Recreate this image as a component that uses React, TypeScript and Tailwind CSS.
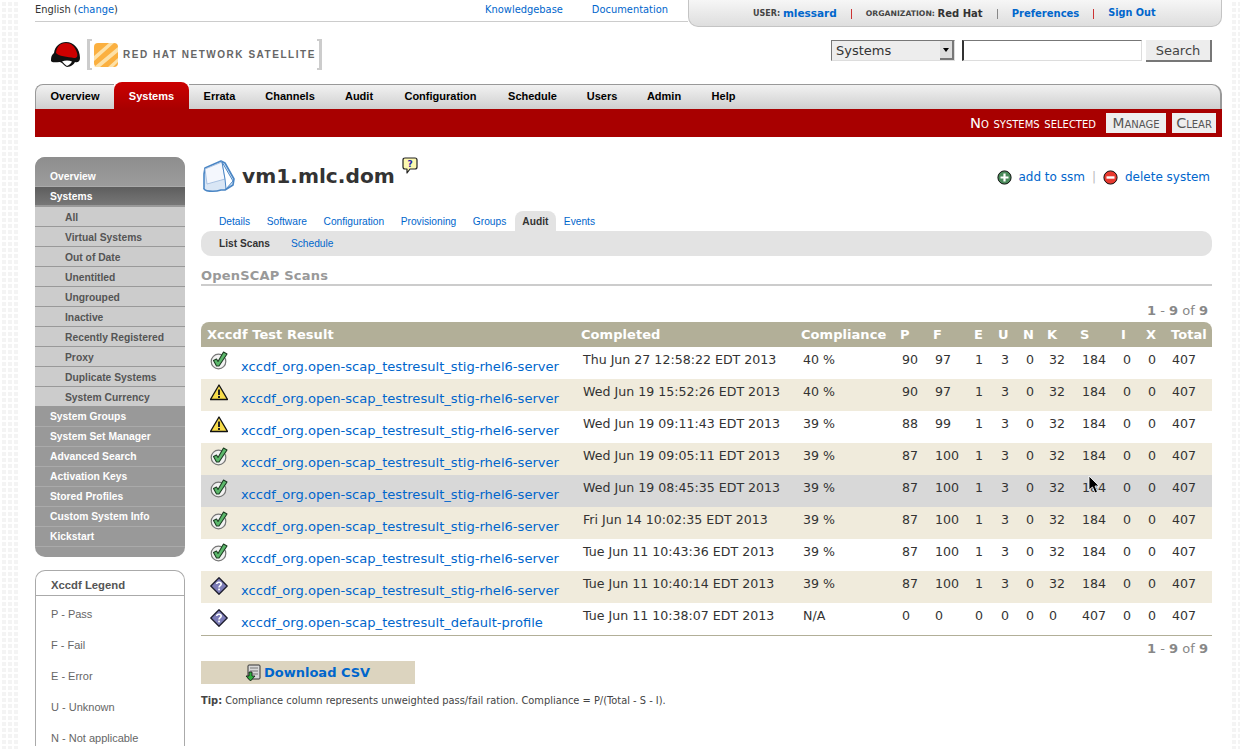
import React from "react";

const Check = () => (
  <svg width="18" height="19" viewBox="0 0 18 19" className="block">
    <circle cx="8.5" cy="10.5" r="7.3" fill="#f2f2f2" stroke="#777" strokeWidth="1.2" />
    <path d="M3.5 9.5 L6.5 8 L8 10.5 L13.5 1 L17 3 L9 15 L6.5 15 Z" fill="#5cb86b" stroke="#1c3d22" strokeWidth="1.1" strokeLinejoin="round" />
  </svg>
);
const Warn = () => (
  <svg width="18" height="17" viewBox="0 0 18 17" className="mt-px block">
    <path d="M9 1 L17.5 15.5 L0.5 15.5 Z" fill="#f7dc4a" stroke="#111" strokeWidth="1.3" strokeLinejoin="round" />
    <rect x="8" y="5.5" width="2" height="5.5" fill="#222" />
    <rect x="8" y="12" width="2" height="2" fill="#222" />
  </svg>
);
const Unknown = () => (
  <svg width="18" height="18" viewBox="0 0 18 18" className="mt-[2px] block">
    <path d="M9 0.8 L17.2 9 L9 17.2 L0.8 9 Z" fill="#7d7db8" stroke="#1c1c2c" strokeWidth="1.3" strokeLinejoin="round" />
    <path d="M6.7 7 C6.9 4.6 11.2 4.6 11.2 7.1 C11.2 8.8 9 8.7 9 10.6" fill="none" stroke="#fff" strokeWidth="1.6" />
    <rect x="8.2" y="11.6" width="1.7" height="1.7" fill="#fff" />
  </svg>
);

const rows: [React.ReactNode, string, string, string, string, string, string, string, string, string, string, string, string, string, string][] = [
  [<Check />, "xccdf_org.open-scap_testresult_stig-rhel6-server", "Thu Jun 27 12:58:22 EDT 2013", "40 %", "90", "97", "1", "3", "0", "32", "184", "0", "0", "407", "bg-white"],
  [<Warn />, "xccdf_org.open-scap_testresult_stig-rhel6-server", "Wed Jun 19 15:52:26 EDT 2013", "40 %", "90", "97", "1", "3", "0", "32", "184", "0", "0", "407", "bg-[#f0ebdc]"],
  [<Warn />, "xccdf_org.open-scap_testresult_stig-rhel6-server", "Wed Jun 19 09:11:43 EDT 2013", "39 %", "88", "99", "1", "3", "0", "32", "184", "0", "0", "407", "bg-white"],
  [<Check />, "xccdf_org.open-scap_testresult_stig-rhel6-server", "Wed Jun 19 09:05:11 EDT 2013", "39 %", "87", "100", "1", "3", "0", "32", "184", "0", "0", "407", "bg-[#f0ebdc]"],
  [<Check />, "xccdf_org.open-scap_testresult_stig-rhel6-server", "Wed Jun 19 08:45:35 EDT 2013", "39 %", "87", "100", "1", "3", "0", "32", "184", "0", "0", "407", "bg-[#d8d8d8]"],
  [<Check />, "xccdf_org.open-scap_testresult_stig-rhel6-server", "Fri Jun 14 10:02:35 EDT 2013", "39 %", "87", "100", "1", "3", "0", "32", "184", "0", "0", "407", "bg-[#f0ebdc]"],
  [<Check />, "xccdf_org.open-scap_testresult_stig-rhel6-server", "Tue Jun 11 10:43:36 EDT 2013", "39 %", "87", "100", "1", "3", "0", "32", "184", "0", "0", "407", "bg-white"],
  [<Unknown />, "xccdf_org.open-scap_testresult_stig-rhel6-server", "Tue Jun 11 10:40:14 EDT 2013", "39 %", "87", "100", "1", "3", "0", "32", "184", "0", "0", "407", "bg-[#f0ebdc]"],
  [<Unknown />, "xccdf_org.open-scap_testresult_default-profile", "Tue Jun 11 10:38:07 EDT 2013", "N/A", "0", "0", "0", "0", "0", "0", "407", "0", "0", "407", "bg-white"],
];

const cols = [380, 220, 99, 33, 41, 24, 25, 24, 33, 41, 25, 25, 41];
const headers = ["Xccdf Test Result", "Completed", "Compliance", "P", "F", "E", "U", "N", "K", "S", "I", "X", "Total"];
const cellPad = ["pl-[2px]", "pl-[2px]", "pl-[2px]", "pl-[2px]", "pl-[1px]", "pl-[3px]", "pl-[3px]", "pl-[2px]", "pl-[2px]", "pl-[2px]", "pl-[2px]", "pl-px"];

const navItems = ["Errata", "Channels", "Audit", "Configuration", "Schedule", "Users", "Admin", "Help"];
const navWidths = ["w-[61px]", "w-[80px]", "w-[58px]", "w-[105px]", "w-[79px]", "w-[60px]", "w-[64px]", "w-[55px]"];

const subItems = ["All", "Virtual Systems", "Out of Date", "Unentitled", "Ungrouped", "Inactive", "Recently Registered", "Proxy", "Duplicate Systems", "System Currency"];
const sideBottom = ["System Groups", "System Set Manager", "Advanced Search", "Activation Keys", "Stored Profiles", "Custom System Info", "Kickstart"];
const legend = ["P - Pass", "F - Fail", "E - Error", "U - Unknown", "N - Not applicable"];
const tabs = ["Details", "Software", "Configuration", "Provisioning", "Groups"];

const Pager = ({ className }: { className: string }) => (
  <div className={`flex justify-end pr-1 text-[13px] leading-4 text-[#888] ${className}`}>
    <span><b>1</b> - <b>9</b> of <b>9</b></span>
  </div>
);

export default function App() {
  return (
    <div className="relative flex h-[749px] justify-between overflow-hidden bg-[#f4f4f4] bg-[linear-gradient(#fff_2px,transparent_2px),linear-gradient(90deg,#fff_2px,transparent_2px)] bg-[size:6px_6px] font-['DejaVu_Sans',sans-serif] text-[#333]">
      <div className="ml-[20px] mr-[5px] h-[749px] w-[1210px] bg-white pl-[15px]">
        {/* top utility row */}
        <div className="flex h-[27px] w-[1187px]">
          <div className="flex h-[22px] w-[653px] items-center justify-between border-b border-[#ccc] pb-[1px] text-[9.9px]">
            <span>English (<a className="text-[#0066cc]">change</a>)</span>
            <span className="mr-[20px] flex gap-[29px] text-[#0066cc]"><a>Knowledgebase</a><a>Documentation</a></span>
          </div>
          <div className="flex h-[27px] w-[534px] items-center rounded-b-[10px] border border-t-0 border-[#c4c4c4] bg-gradient-to-b from-[#f6f6f6] to-[#dedede] pl-[64px] pt-px text-[10px] font-bold">
            <span className="text-[8px] text-[#444]">USER:&nbsp;</span><a className="text-[10.5px] text-[#0066cc]">mlessard</a>
            <span className="mx-[14px] h-[10px] w-px bg-[#c33]" />
            <span className="text-[7.7px] text-[#444]">ORGANIZATION:&nbsp;</span><span className="text-[10px] text-[#333]">Red Hat</span>
            <span className="mx-[14px] h-[10px] w-px bg-[#888]" />
            <a className="text-[10px] text-[#0066cc]">Preferences</a>
            <span className="mx-[14px] h-[10px] w-px bg-[#c33]" />
            <a className="text-[9.7px] text-[#0066cc]">Sign Out</a>
          </div>
        </div>

        {/* logo + search */}
        <div className="flex h-[55px] w-[1177px] items-start justify-between">
          <div className="mt-[12px] flex items-center pl-[15px]">
            <svg width="31" height="27" viewBox="0 0 31 27" className="block">
              <path d="M1 20 C1 14 3 13 4 12 C5 5 10 1 16 1 C24 1 30 8 30 17 C30 21 27 22 25 21 C24 23 21 26 17 26 C14 25 13 22 10 21 C6 21 2 22 1 20 Z" fill="#111" />
              <path d="M6 12 C6.5 6 10 2 16 2 C21 2 25 5 27 12 C28 15 27 17 24 17 C18 16 8 15 6 12 Z" fill="#cc0000" />
              <path d="M12 20.5 C15 19 19 19 22 20.5 C21 23 19 24 17 25 C15 24 14 22 12 20.5 Z" fill="#fff" />
            </svg>
            <div className="relative ml-[6px] flex h-[31px] w-[235px] items-center">
              <span className="h-full w-[5px] border-y-[2px] border-l-[3px] border-[#ccc]" />
              <svg width="24" height="24" viewBox="0 0 24 24" className="ml-[2px] block">
                <rect width="24" height="24" rx="4" fill="#fbb040" />
                <path d="M0 24 L24 4 L24 9 L6 24 Z M0 13 L15 0 L20 0 L0 18 Z M14 24 L24 15 L24 19 L19 24 Z" fill="#fde1a8" />
              </svg>
              <span className="ml-[5px] whitespace-nowrap font-['Liberation_Sans',sans-serif] text-[10px] font-bold tracking-[1.53px] text-[#666]">RED HAT NETWORK SATELLITE</span>
              <span className="absolute right-0 top-0 h-full w-[5px] border-y-[2px] border-r-[3px] border-[#ccc]" />
            </div>
          </div>
          <div className="mt-[13px] flex items-start text-[13px]">
            <div className="flex h-[21px] w-[124px] items-center justify-between border border-[#777] border-b-[#ddd] border-r-[#ddd] bg-[#ededed] pl-[4px]">
              <span>Systems</span>
              <span className="flex h-[19px] w-[14px] items-center justify-center border-b-2 border-r-2 border-[#777] bg-[#ddd]">
                <span className="h-0 w-0 border-x-[3px] border-t-[4px] border-x-transparent border-t-black" />
              </span>
            </div>
            <input className="ml-[7px] h-[21px] w-[180px] border border-l-2 border-[#777] border-b-[#ddd] border-l-[#333] border-r-[#ddd] bg-white outline-none" />
            <button className="ml-[4px] h-[22px] w-[66px] border-b-2 border-r-2 border-[#777] bg-[#ededed] pt-px text-center text-[#444]">Search</button>
          </div>
        </div>

        {/* nav */}
        <div className="flex h-[27px] w-[1187px] items-end rounded-t-[8px] font-['Liberation_Sans',sans-serif] text-[11px] font-bold">
          <div className="flex h-[25px] w-[79px] items-center justify-center rounded-tl-[8px] border-l border-t border-[#999] bg-gradient-to-b from-[#f2f2f2] to-[#cfcfcf] pb-px text-black">Overview</div>
          <div className="flex h-[27px] w-[75px] items-center justify-center rounded-t-[8px] bg-gradient-to-b from-[#cc0000] to-[#a80000] pt-[1px] text-white">Systems</div>
          <div className="flex h-[25px] flex-1 items-center rounded-tr-[10px] border-r-2 border-t border-[#999] bg-gradient-to-b from-[#f2f2f2] to-[#cfcfcf] pb-[2px] text-black">
            {navItems.map((n, i) => (
              <span key={n} className={`${navWidths[i]} text-center`}>{n}</span>
            ))}
          </div>
        </div>
        <div className="flex h-[28px] w-[1187px] items-center justify-end bg-[#a80000] pr-[6px] text-white">
          <span className="pt-px text-[14.7px] [font-variant:small-caps]">No systems selected</span>
          <span className="ml-[10px] flex h-[20px] w-[60px] items-center justify-center bg-[#eee] pt-px text-[13.8px] text-[#555] [font-variant:small-caps]">Manage</span>
          <span className="ml-[6px] flex h-[20px] w-[44px] items-center justify-center bg-[#eee] pt-px text-[14.4px] text-[#555] [font-variant:small-caps]">Clear</span>
        </div>

        <div className="mt-[20px] flex">
          {/* sidebar */}
          <div className="w-[150px] font-['Liberation_Sans',sans-serif] text-[10.3px] font-bold">
            <div className="overflow-hidden rounded-[10px] bg-[#999] text-white">
              <div className="flex h-[30px] items-end border-b border-[#aaa] bg-gradient-to-b from-[#8e8e8e] to-[#9c9c9c] pb-[2px] pl-[15px]">Overview</div>
              <div className="flex h-[20px] items-center border-b-2 border-[#999] bg-gradient-to-b from-[#5e5e5e] to-[#777] pl-[15px] pt-px">Systems</div>
              {subItems.map((s) => (
                <div key={s} className="flex h-[20px] items-center border-b border-[#999] bg-[#ccc] pl-[30px] pt-[2px] text-[#555]">{s}</div>
              ))}
              {sideBottom.map((s) => (
                <div key={s} className="flex h-[20px] items-center border-b border-[#aaa] pl-[15px] last:border-b-0">{s}</div>
              ))}
              <div className="h-[10px]" />
            </div>
            <div className="mt-[13px] rounded-t-[10px] border border-b-0 border-[#aaa] font-normal text-[#666]">
              <div className="flex h-[25px] items-center border-b border-[#aaa] pl-[15px] pt-[4px] text-[11.3px] font-bold text-[#555]">Xccdf Legend</div>
              <div className="flex flex-col gap-[15px] pl-[15px] pt-[10px] text-[11px] leading-4">
                {legend.map((l) => (
                  <div key={l}>{l}</div>
                ))}
              </div>
            </div>
          </div>

          {/* main */}
          <div className="ml-[16px] w-[1011px]">
            <div className="flex h-[54px] items-start justify-between">
              <div className="flex items-start">
                <svg width="34" height="33" viewBox="0 0 34 33" className="mt-[3px] block">
                  <path d="M3 27 C1 32 14 32 20 30 L24 30 L32 25 L33 19 L24 3 L20 1 L4 8 L3 14 Z" fill="#d9e6f5" stroke="#4a86c5" strokeWidth="1.6" strokeLinejoin="round" />
                  <path d="M4 9 L21 2 L24 19 L6 24 Z" fill="#f4f7fd" stroke="#9ab8dc" strokeWidth="0.8" />
                  <path d="M24 19 L21 2 L32 21 L25 29 Z" fill="#fff" stroke="#4a86c5" strokeWidth="1" />
                </svg>
                <h1 className="ml-[7px] mt-[5px] text-[20.2px] font-bold leading-7 text-[#333]">vm1.mlc.dom</h1>
                <svg width="16" height="18" viewBox="0 0 16 18" className="ml-[7px] block">
                  <path d="M3 1 H13 Q15 1 15 3 V10 Q15 12 13 12 H8 L5 16 V12 H3 Q1 12 1 10 V3 Q1 1 3 1 Z" fill="#fdf8b0" stroke="#222" strokeWidth="1.2" strokeLinejoin="round" />
                  <text x="8" y="10" textAnchor="middle" fontSize="9" fontWeight="bold" fill="#2222aa" fontFamily="DejaVu Sans">?</text>
                </svg>
              </div>
              <div className="mr-[2px] mt-[12px] flex items-center text-[12px] leading-4 text-[#0066cc]">
                <svg width="15" height="15" viewBox="0 0 15 15" className="block">
                  <circle cx="7.5" cy="7.5" r="6.6" fill="#4a8a5a" stroke="#111" />
                  <path d="M7.5 3.5 V11.5 M3.5 7.5 H11.5" stroke="#fff" strokeWidth="2.2" />
                </svg>
                <a className="ml-[6px]">add to ssm</a>
                <span className="mx-[7px] text-[#bbb]">|</span>
                <svg width="15" height="15" viewBox="0 0 15 15" className="block">
                  <circle cx="7.5" cy="7.5" r="6.6" fill="#e8392f" stroke="#111" />
                  <path d="M3.5 7.5 H11.5" stroke="#fff" strokeWidth="2.4" />
                </svg>
                <a className="ml-[7px]">delete system</a>
              </div>
            </div>

            <div className="flex h-[20px] items-center pl-[18px] pt-px font-['Liberation_Sans',sans-serif] text-[10.2px] text-[#0066cc]">
              {tabs.map((t) => (
                <a key={t} className="mr-[16.6px]">{t}</a>
              ))}
              <span className="-ml-[8px] -mt-px flex h-[20px] w-[41px] items-center justify-center rounded-t-[8px] bg-[#e3e3e3] pt-px font-bold text-[#333]">Audit</span>
              <a className="ml-[8px]">Events</a>
            </div>
            <div className="flex h-[25px] items-center gap-[21px] rounded-[10px] bg-[#e3e3e3] pl-[18px] font-['Liberation_Sans',sans-serif] text-[10.2px]">
              <span className="font-bold text-[#333]">List Scans</span>
              <a className="text-[#0066cc]">Schedule</a>
            </div>

            <div className="mt-[12px] border-b-2 border-[#ccc] text-[13px] font-bold leading-4 tracking-[0.2px] text-[#999]">OpenSCAP Scans</div>
            <Pager className="mt-[17px]" />

            <table className="mt-[3px] w-[1011px] table-fixed border-separate border-spacing-0 text-[13px]">
              <colgroup>
                {cols.map((w, i) => (
                  <col key={i} width={w} />
                ))}
              </colgroup>
              <thead>
                <tr className="h-[25px] bg-[#b2af98] text-left font-bold tracking-[0.05px] text-white">
                  {headers.map((h, i) => (
                    <th key={h} className={`whitespace-nowrap p-0 ${i === 0 ? "rounded-tl-[8px] pl-[6px]" : i === 12 ? "rounded-tr-[8px]" : ""}`}>{h}</th>
                  ))}
                </tr>
              </thead>
              <tbody>
                {rows.map((r, idx) => (
                  <tr key={idx} className={`h-[32px] ${r[14]}`}>
                    <td className="p-0 align-top">
                      <div className="flex">
                        <span className="ml-[9px] mt-[4px] w-[31px]">{r[0]}</span>
                        <a className="mt-[12px] whitespace-nowrap text-[13.08px] leading-4 text-[#0066cc]">{r[1]}</a>
                      </div>
                    </td>
                    {r.slice(2, 14).map((c, i) => (
                      <td key={i} className={`whitespace-nowrap p-0 pt-[5px] align-top text-[12.6px] leading-4 ${cellPad[i]}`}>{c as string}</td>
                    ))}
                  </tr>
                ))}
              </tbody>
            </table>
            <div className="border-t border-[#b2af98]" />
            <Pager className="mt-[5px]" />
            <div className="mt-[4px] flex h-[23px] w-[214px] items-center gap-[3px] bg-[#dcd4bf] pl-[44px] text-[13px] font-bold text-[#0066cc]">
              <svg width="16" height="18" viewBox="0 0 16 18" className="block">
                <rect x="3" y="1" width="12" height="14" rx="1" fill="#d8d8d8" stroke="#333" />
                <path d="M5 4 H13 M5 7 H13 M5 10 H13" stroke="#777" />
                <path d="M4 8 H7 V12 H10 L5.5 17 L1 12 H4 Z" fill="#2fae3f" stroke="#111" strokeWidth="0.8" />
              </svg>
              <a>Download CSV</a>
            </div>
            <div className="mt-[9px] text-[9.85px] leading-4 text-[#444]"><b>Tip:</b> Compliance column represents unweighted pass/fail ration. Compliance = P/(Total - S - I).</div>
          </div>
        </div>
      </div>

      {/* mouse cursor */}
      <svg width="12" height="20" viewBox="0 0 12 20" className="absolute left-[1088px] top-[475px] block">
        <path d="M1 1 L1 15 L4.5 12 L7 18 L9.5 17 L7 11 L11 11 Z" fill="#000" stroke="#fff" strokeWidth="0.8" />
      </svg>
    </div>
  );
}
